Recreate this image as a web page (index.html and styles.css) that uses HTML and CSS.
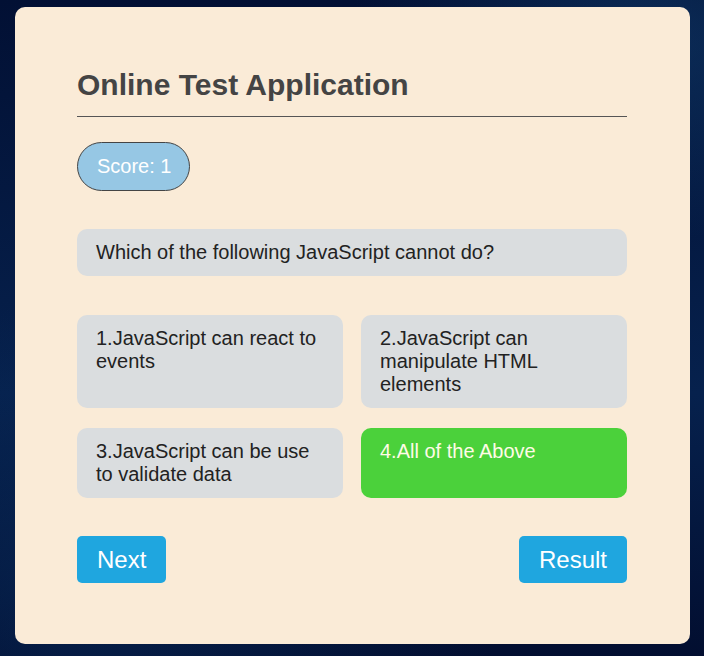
FILE: index.html
```html
<!DOCTYPE html>
<html>
<head>
<meta charset="utf-8">
<link rel="stylesheet" href="styles.css">
</head>
<body>
<main class="card">
  <h1 class="title">Online Test Application</h1>
  <div class="score">Score: 1</div>
  <div class="question">Which of the following JavaScript cannot do?</div>
  <div class="options">
    <div class="option">1.JavaScript can react to events</div>
    <div class="option">2.JavaScript can manipulate HTML elements</div>
    <div class="option">3.JavaScript can be use to validate data</div>
    <div class="option correct">4.All of the Above</div>
  </div>
  <div class="actions">
    <button class="btn">Next</button>
    <button class="btn">Result</button>
  </div>
</main>
</body>
</html>
```
FILE: styles.css
```css
html, body {
  margin: 0;
  height: 100%;
}
body {
  font-family: "Liberation Sans", Arial, sans-serif;
  background-color: #03123a;
  background-image:
    radial-gradient(ellipse 300px 200px at 650px 40px, rgba(20, 70, 120, 0.5), transparent),
    radial-gradient(ellipse 400px 300px at 100px 600px, rgba(10, 50, 100, 0.45), transparent),
    linear-gradient(180deg, #021034 0%, #06214d 60%, #020e30 100%);
  padding: 7px 14px 12px 15px;
  box-sizing: border-box;
}
.card {
  background: #faebd7;
  border-radius: 10px;
  padding: 61px 63px 61px 62px;
  width: 675px;
  box-sizing: border-box;
}
.title {
  margin: 0;
  font-size: 30px;
  font-weight: bold;
  color: #444;
  line-height: 34px;
  padding-bottom: 14px;
  border-bottom: 1px solid #555;
}
.score {
  display: inline-block;
  margin-top: 25px;
  background: #96c7e4;
  border: 1px solid #444;
  border-radius: 25px;
  color: #fff;
  font-size: 20px;
  line-height: 23px;
  padding: 12px 18px 12px 19px;
}
.question {
  margin-top: 38px;
  background: #dadddf;
  border-radius: 10px;
  color: #222;
  font-size: 20px;
  line-height: 23px;
  padding: 12px 19px;
}
.options {
  margin-top: 39px;
  display: grid;
  grid-template-columns: 1fr 1fr;
  column-gap: 18px;
  row-gap: 20px;
}
.option {
  background: #dadddf;
  border-radius: 10px;
  color: #222;
  font-size: 20px;
  line-height: 23px;
  padding: 12px 20px 12px 19px;
}
.option.correct {
  background: #4bd13b;
  color: #fffbe6;
}
.actions {
  margin-top: 38px;
  display: flex;
  justify-content: space-between;
}
.btn {
  font-family: "Liberation Sans", Arial, sans-serif;
  background: #1fa6df;
  color: #fff;
  border: none;
  border-radius: 5px;
  font-size: 24px;
  height: 47px;
  padding: 0 20px;
}
```
